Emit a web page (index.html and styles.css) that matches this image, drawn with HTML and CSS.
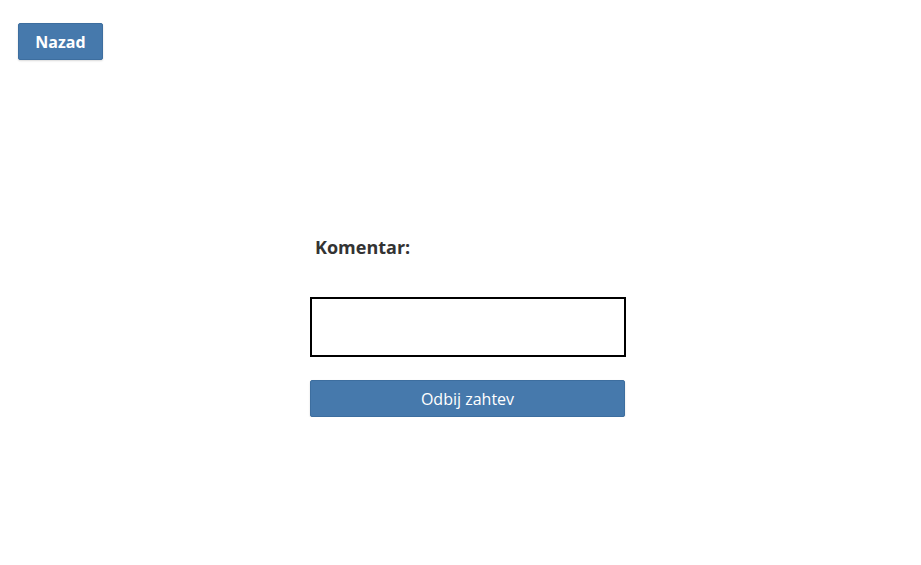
FILE: index.html
```html
<!DOCTYPE html>
<html>
<head>
<meta charset="utf-8">
<link rel="stylesheet" href="styles.css">
</head>
<body>
<div class="top">
  <button class="btn btn-back">Nazad</button>
</div>
<div class="form">
  <label class="label">Komentar:</label>
  <textarea class="comment"></textarea>
  <button class="btn btn-reject">Odbij zahtev</button>
</div>
</body>
</html>
```

FILE: styles.css
```css
html, body {
  margin: 0;
  padding: 0;
  background: #fff;
  font-family: "Open Sans", "Noto Sans", sans-serif;
}
.top {
  padding: 23px 0 0 18px;
}
.btn {
  background: #4679ac;
  color: #fff;
  border: 1px solid #3d6e9f;
  border-radius: 2px;
  font-family: "Open Sans", "Noto Sans", sans-serif;
  font-size: 16px;
  height: 37px;
  padding: 0;
  cursor: pointer;
  box-shadow: 0 1px 2px rgba(0,0,0,0.15);
}
.btn-back {
  width: 85px;
  font-weight: 700;
}
.form {
  display: flex;
  flex-direction: column;
  align-items: flex-start;
  margin: 176px 0 0 310px;
  width: 316px;
}
.label {
  font-weight: 700;
  font-size: 18px;
  color: #333;
  margin-left: 5px;
  line-height: 22px;
}
.comment {
  box-sizing: border-box;
  width: 316px;
  height: 60px;
  margin-top: 39px;
  border: 2px solid #000;
  resize: none;
  outline: none;
  padding: 4px;
}
.btn-reject {
  margin-top: 23px;
  width: 315px;
  font-weight: 400;
}
```
